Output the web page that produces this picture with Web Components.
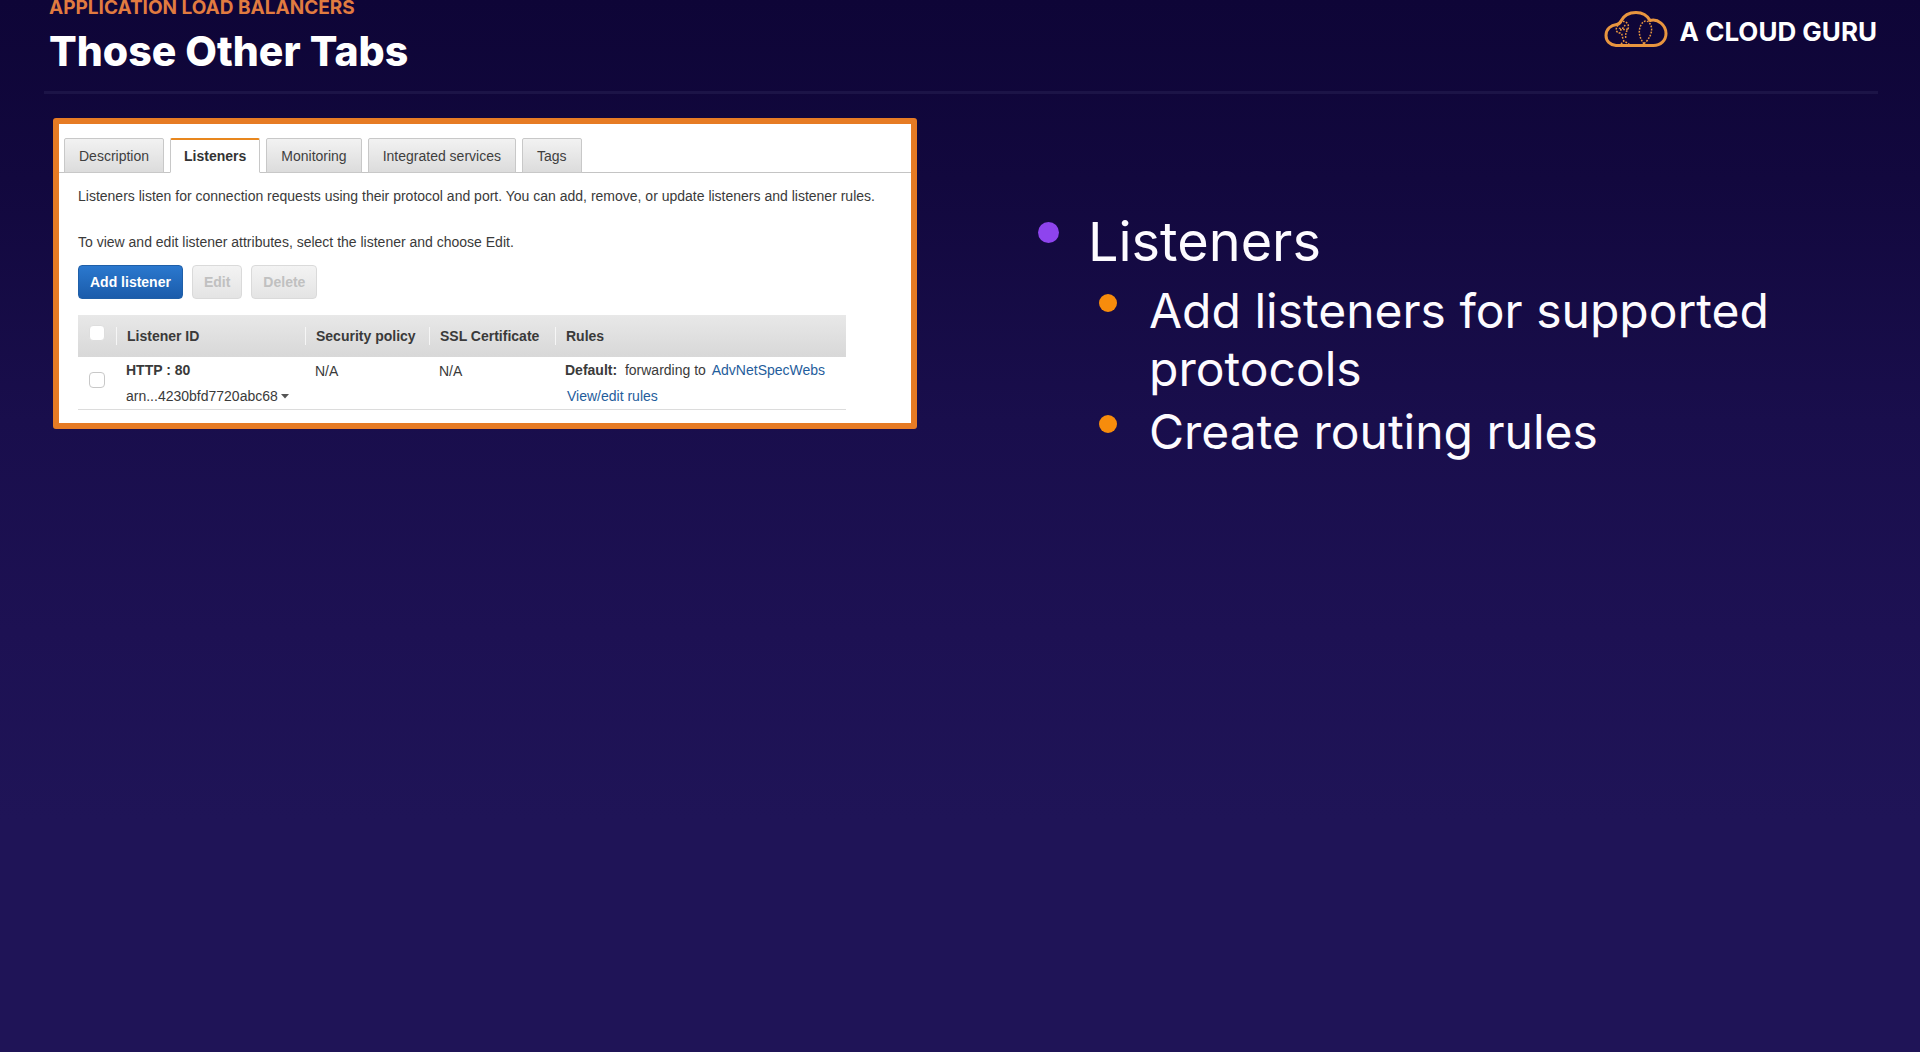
<!DOCTYPE html>
<html lang="en">
<head>
<meta charset="utf-8">
<title>Those Other Tabs</title>
<style>
html { height: 100%; }
body {
  margin: 0;
  min-height: 100%;
  font-family: Inter, "Liberation Sans", sans-serif;
  color: #fdfbff;
  background: linear-gradient(#0e0537 0%, #12083e 17%, #190e4c 40%, #1d1153 60%, #1f1457 78%, #1f1457 100%);
}
</style>
</head>
<body>
<lesson-slide>
  <slide-header slot="header">
    <span slot="topic">APPLICATION LOAD BALANCERS</span>
    <span slot="title">Those Other Tabs</span>
    <brand-logo slot="brand">A CLOUD GURU</brand-logo>
  </slide-header>
  <console-panel slot="figure">
    <tab-strip slot="tabs">
      <tab-item>Description</tab-item>
      <tab-item active>Listeners</tab-item>
      <tab-item>Monitoring</tab-item>
      <tab-item>Integrated services</tab-item>
      <tab-item>Tags</tab-item>
    </tab-strip>
    <span slot="intro">Listeners listen for connection requests using their protocol and port. You can add, remove, or update listeners and listener rules.</span>
    <span slot="hint">To view and edit listener attributes, select the listener and choose Edit.</span>
    <action-button slot="actions" primary>Add listener</action-button>
    <action-button slot="actions" disabled>Edit</action-button>
    <action-button slot="actions" disabled>Delete</action-button>
    <listener-table></listener-table>
  </console-panel>
  <bullet-item slot="points">Listeners
    <bullet-item slot="children" sub>Add listeners for supported protocols</bullet-item>
    <bullet-item slot="children" sub>Create routing rules</bullet-item>
  </bullet-item>
</lesson-slide>

<script>
const define = (name, html, setup) => {
  const template = document.createElement('template');
  template.innerHTML = html;
  customElements.define(name, class extends HTMLElement {
    constructor() {
      super();
      this.attachShadow({ mode: 'open' }).append(template.content.cloneNode(true));
    }
    connectedCallback() { if (setup) setup(this, this.shadowRoot); }
  });
};

define('lesson-slide', `
  <style>
    :host { display: block; padding: 0 42px 0 44px; }
    main { display: grid; grid-template-columns: minmax(0, 864fr) minmax(0, 840fr); column-gap: 121px; align-items: start; padding: 24px 0 0 9px; }
    .points { padding-top: 90px; }
  </style>
  <slot name="header"></slot>
  <main>
    <slot name="figure"></slot>
    <div class="points" role="list"><slot name="points"></slot></div>
  </main>`);

define('slide-header', `
  <style>
    :host { display: block; }
    header { display: flex; justify-content: space-between; align-items: flex-start; height: 91px; padding: 0 1px 0 5px; border-bottom: 3px solid #1c1447; }
    p { margin: 0; font-size: 19px; line-height: 16px; font-weight: 700; color: #e17b40; }
    h1 { margin: 9px 0 0; font-size: 41px; line-height: 52px; font-weight: 800; color: #fff; }
  </style>
  <header>
    <div><p><slot name="topic"></slot></p><h1><slot name="title"></slot></h1></div>
    <slot name="brand"></slot>
  </header>`);

define('brand-logo', `
  <style>
    :host { display: flex; align-items: flex-start; gap: 12px; padding-top: 10px; font-size: 26px; line-height: 44px; font-weight: 700; color: #fff; white-space: nowrap; }
    svg { display: block; }
  </style>
  <svg width="64" height="38" viewBox="0 0 64 38" fill="none" stroke="#e8953f" aria-hidden="true">
    <path stroke-width="3" stroke-linejoin="round" d="M12 35.500C6 35 2 31 2 25.500C2 19 7 15 12.500 14.500C14.500 14.500 16 13 17 11C20 5 26 2.500 32 2.500C38 2.500 43 5 46 10.500C54 8.500 62 15 62 23.500C62 30.500 56.500 35.500 49.500 35.500Z"/>
    <g stroke-width="1.500" stroke-dasharray="1.800 1.300">
      <path d="M40 34C35 27 34 21 37 15C39 11 42 10 44.500 12C49 16 49 24 42 32L38 35"/>
      <path d="M14 15C11 19 12 23 16 23C19 23 18 29 20 31L26 35M16 13C21 9 26 14 24 19C22 22 21 25 22 29M15 18C18 20 21 17 21 14M17 34L20 31M16 20L24 19"/>
    </g>
  </svg>
  <span><slot></slot></span>`);

define('console-panel', `
  <style>
    :host { display: block; border: 6px solid #e67b24; border-radius: 3px; background: #fff; color: #3a3a3a; font-family: "Liberation Sans", Arial, sans-serif; font-size: 14px; padding: 14px 0 13px; }
    .body { padding: 0 0 0 19px; }
    p { margin: 0; line-height: 18px; }
    .intro { padding-top: 14px; white-space: nowrap; }
    .hint { padding-top: 28px; }
    .actions { display: flex; gap: 9px; padding: 14px 0 16px; }
  </style>
  <slot name="tabs"></slot>
  <div class="body">
    <p class="intro"><slot name="intro"></slot></p>
    <p class="hint"><slot name="hint"></slot></p>
    <div class="actions"><slot name="actions"></slot></div>
    <slot></slot>
  </div>`);

define('tab-strip', `
  <style>:host { display: flex; gap: 6px; padding-left: 5px; border-bottom: 1px solid #c4c4c4; }</style>
  <slot></slot>`);

define('tab-item', `
  <style>
    :host { display: block; margin-bottom: -1px; }
    button { display: block; box-sizing: border-box; height: 35px; padding: 0 14px; font: inherit; color: #3f3f3f; background: linear-gradient(#f2f2f2, #dcdcdc); border: 1px solid #c8c8c8; border-radius: 2px 2px 0 0; }
    :host([active]) button { font-weight: 700; background: #fff; color: #333; border-top: 2px solid #e8871e; border-bottom-color: #fff; padding: 0 13px; }
  </style>
  <button type="button" role="tab"><slot></slot></button>`);

define('action-button', `
  <style>
    :host { display: block; }
    button { display: block; box-sizing: border-box; height: 34px; padding: 0 11px; font: inherit; font-weight: 700; border-radius: 4px; border: 1px solid #dadada; background: linear-gradient(#f3f3f3, #e4e4e4); color: #c0c0c0; }
    :host([primary]) button { color: #fff; border-color: #1f5fa8; background: linear-gradient(#2b78ce, #1b5cab); }
  </style>
  <button type="button"><slot></slot></button>`,
  (host, root) => { root.querySelector('button').disabled = host.hasAttribute('disabled'); });

define('listener-table', `
  <style>
    :host { display: block; width: 768px; max-width: 100%; }
    table { width: 100%; table-layout: fixed; border-collapse: collapse; border-bottom: 1px solid #dcdcdc; }
    th, td { padding: 0; text-align: left; line-height: 26px; white-space: nowrap; }
    thead tr { background: linear-gradient(#e8e8e8, #d8d8d8); height: 42px; }
    th div { line-height: 18px; padding-left: 10px; border-left: 1px solid #f6f6f6; }
    td { vertical-align: top; padding-left: 10px; }
    td.na { line-height: 28px; }
    th.pick, td.pick { padding-left: 11px; vertical-align: middle; }
    input { appearance: none; display: block; box-sizing: border-box; width: 16px; height: 16px; margin: 0; border: 1px solid #c8c8c8; border-radius: 4px; background: #fff; }
    th input, td input { margin-bottom: 6px; }
    th input { border-color: #dedede; }
    a { color: #1f5d9c; text-decoration: none; }
    .rule a { margin-left: 2px; }
    .arn { display: flex; align-items: center; gap: 3px; }
    .line { display: block; line-height: 26px; }
  </style>
  <table>
    <colgroup><col style="width:38px"><col style="width:189px"><col style="width:124px"><col style="width:126px"><col></colgroup>
    <thead><tr>
      <th class="pick"><input type="checkbox" aria-label="Select all listeners"></th>
      <th><div>Listener ID</div></th><th><div>Security policy</div></th><th><div>SSL Certificate</div></th><th><div>Rules</div></th>
    </tr></thead>
    <tbody><tr>
      <td class="pick"><input type="checkbox" aria-label="Select HTTP : 80"></td>
      <td><b class="line">HTTP : 80</b><span class="arn">arn...4230bfd7720abc68<svg width="8" height="5" viewBox="0 0 8 5" aria-hidden="true"><path d="M0 0H8L4 4.500Z" fill="#555"/></svg></span></td>
      <td class="na">N/A</td><td class="na">N/A</td>
      <td class="rule"><span class="line"><b>Default:</b>&nbsp; forwarding to <a href="#target">AdvNetSpecWebs</a></span><span class="line"><a href="#rules">View/edit rules</a></span></td>
    </tr></tbody>
  </table>`);

define('bullet-item', `
  <style>
    :host { display: block; font-size: 54px; line-height: 68px; }
    :host([sub]) { font-size: 48px; line-height: 58px; padding-bottom: 5px; }
    .row { display: grid; grid-template-columns: 20px minmax(0, 1fr); column-gap: 30px; }
    i { width: 21px; height: 21px; border-radius: 50%; background: #8e44ee; margin-top: 14px; }
    :host([sub]) i { width: 18px; height: 18px; background: #f78c0c; margin-top: 12px; }
    .children { padding: 6px 0 0 61px; }
    :host([sub]) .children { display: none; }
  </style>
  <div class="row"><i></i><span><slot></slot></span></div>
  <div class="children" role="list"><slot name="children"></slot></div>`,
  host => host.setAttribute('role', 'listitem'));
</script>
</body>
</html>
